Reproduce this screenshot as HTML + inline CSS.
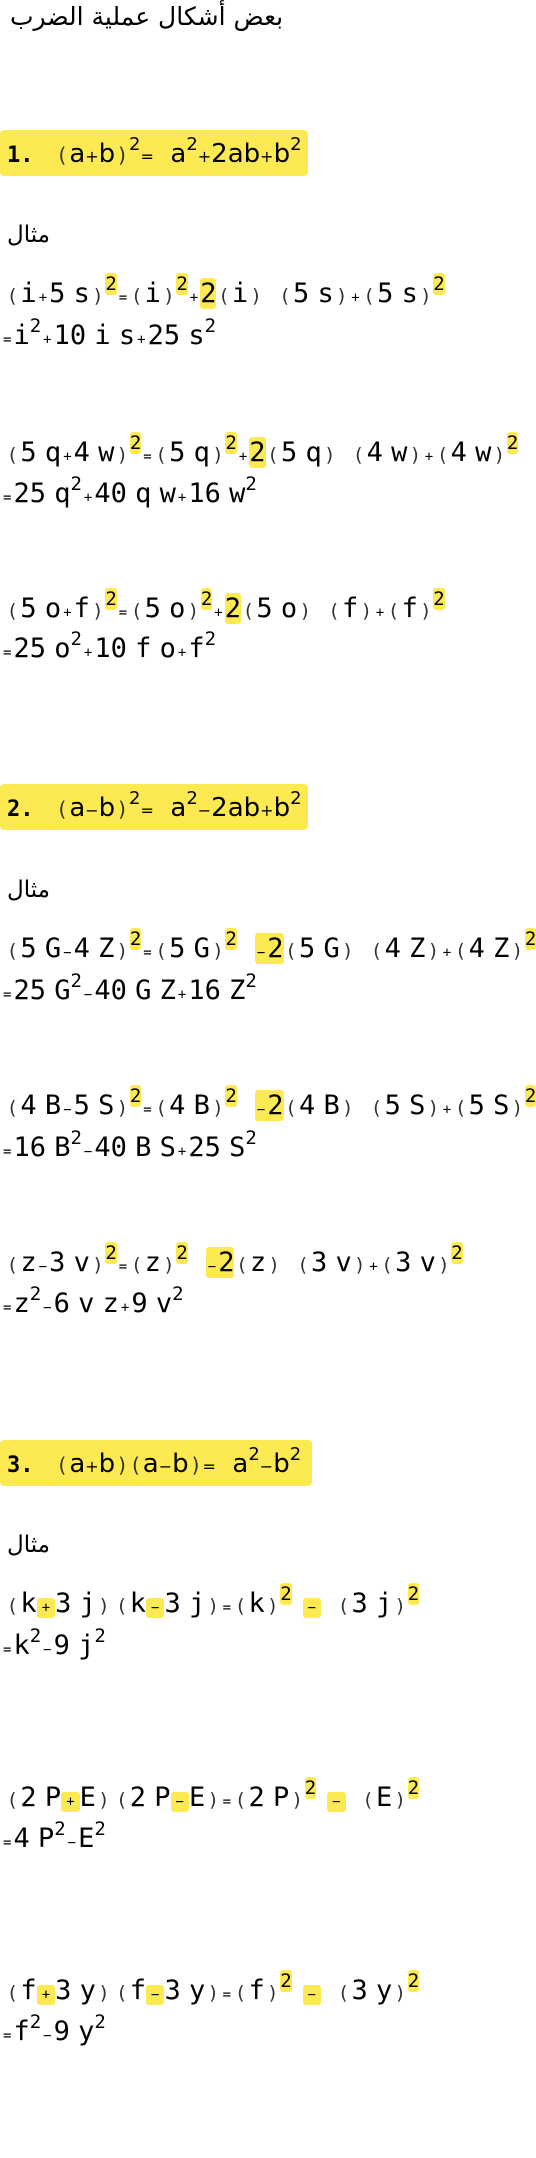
<!DOCTYPE html>
<html><head><meta charset="utf-8">
<style>
html,body{margin:0;padding:0;background:#fff;}
body{width:536px;height:2158px;position:relative;overflow:hidden;color:#000;}
.t{position:absolute;left:10px;top:2px;font-family:"DejaVu Sans",sans-serif;font-size:25px;direction:rtl;}
.m{position:absolute;left:7px;font-family:"DejaVu Sans",sans-serif;font-size:23px;direction:rtl;}
.box{position:absolute;left:0;height:46px;background:#fdea52;border-radius:4px;white-space:nowrap;font-family:"DejaVu Sans",sans-serif;font-size:26px;line-height:48px;}
.box b{font-family:"DejaVu Sans Mono",monospace;font-size:22px;margin-left:7px;margin-right:22px;}
.box .bp{font-size:20px;color:#333;margin:0 3px;}
.box .bo{font-size:16px;}
.box sup{font-size:18px;vertical-align:0;position:relative;top:-12px;}
.l{position:absolute;left:5px;white-space:nowrap;font-family:"DejaVu Sans Mono",monospace;font-size:27px;line-height:1;word-spacing:-8px;}
.o{font-size:14px;margin:0 2px;}
.p{font-family:"DejaVu Sans",sans-serif;font-size:19px;color:#333;margin:0 4px;}
.s{font-size:19px;position:relative;top:-12px;}
.h{background:#fdea52;border-radius:3px;}
.ho{font-size:14px;background:#fdea52;border-radius:3px;padding:2px 5px;}
.g{display:inline-block;width:14px;}
</style></head><body>
<div class="t">بعض أشكال عملية الضرب</div>

<div class="box" style="top:130px;width:308px"><b>1.</b><span class="bp">(</span>a<span class="bo">+</span>b<span class="bp">)</span><sup>2</sup><span class="bo">=</span>&nbsp; a<sup>2</sup><span class="bo">+</span>2ab<span class="bo">+</span>b<sup>2</sup></div>
<div class="m" style="top:222px">مثال</div>
<div class="l" style="top:280px"><span class="p">(</span>i<span class="o">+</span>5 s<span class="p">)</span><span class="s h">2</span><span class="o">=</span><span class="p">(</span>i<span class="p">)</span><span class="s h">2</span><span class="o">+</span><span class="h">2</span><span class="p">(</span>i<span class="p">)</span><i class="g"></i><span class="p">(</span>5 s<span class="p">)</span><span class="o">+</span><span class="p">(</span>5 s<span class="p">)</span><span class="s h">2</span></div>
<div class="l" style="top:322px;left:1px"><span class="o">=</span>i<span class="s">2</span><span class="o">+</span>10 i s<span class="o">+</span>25 s<span class="s">2</span></div>

<div class="l" style="top:439px"><span class="p">(</span>5 q<span class="o">+</span>4 w<span class="p">)</span><span class="s h">2</span><span class="o">=</span><span class="p">(</span>5 q<span class="p">)</span><span class="s h">2</span><span class="o">+</span><span class="h">2</span><span class="p">(</span>5 q<span class="p">)</span><i class="g"></i><span class="p">(</span>4 w<span class="p">)</span><span class="o">+</span><span class="p">(</span>4 w<span class="p">)</span><span class="s h">2</span></div>
<div class="l" style="top:480px;left:1px"><span class="o">=</span>25 q<span class="s">2</span><span class="o">+</span>40 q w<span class="o">+</span>16 w<span class="s">2</span></div>

<div class="l" style="top:595px"><span class="p">(</span>5 o<span class="o">+</span>f<span class="p">)</span><span class="s h">2</span><span class="o">=</span><span class="p">(</span>5 o<span class="p">)</span><span class="s h">2</span><span class="o">+</span><span class="h">2</span><span class="p">(</span>5 o<span class="p">)</span><i class="g"></i><span class="p">(</span>f<span class="p">)</span><span class="o">+</span><span class="p">(</span>f<span class="p">)</span><span class="s h">2</span></div>
<div class="l" style="top:635px;left:1px"><span class="o">=</span>25 o<span class="s">2</span><span class="o">+</span>10 f o<span class="o">+</span>f<span class="s">2</span></div>

<div class="box" style="top:784px;width:308px"><b>2.</b><span class="bp">(</span>a<span class="bo">−</span>b<span class="bp">)</span><sup>2</sup><span class="bo">=</span>&nbsp; a<sup>2</sup><span class="bo">−</span>2ab<span class="bo">+</span>b<sup>2</sup></div>
<div class="m" style="top:877px">مثال</div>
<div class="l" style="top:935px"><span class="p">(</span>5 G<span class="o">−</span>4 Z<span class="p">)</span><span class="s h">2</span><span class="o">=</span><span class="p">(</span>5 G<span class="p">)</span><span class="s h">2</span><i class="g" style="width:18px"></i><span class="h"><span class="o">−</span>2</span><span class="p">(</span>5 G<span class="p">)</span><i class="g"></i><span class="p">(</span>4 Z<span class="p">)</span><span class="o">+</span><span class="p">(</span>4 Z<span class="p">)</span><span class="s h">2</span></div>
<div class="l" style="top:977px;left:1px"><span class="o">=</span>25 G<span class="s">2</span><span class="o">−</span>40 G Z<span class="o">+</span>16 Z<span class="s">2</span></div>

<div class="l" style="top:1092px"><span class="p">(</span>4 B<span class="o">−</span>5 S<span class="p">)</span><span class="s h">2</span><span class="o">=</span><span class="p">(</span>4 B<span class="p">)</span><span class="s h">2</span><i class="g" style="width:18px"></i><span class="h"><span class="o">−</span>2</span><span class="p">(</span>4 B<span class="p">)</span><i class="g"></i><span class="p">(</span>5 S<span class="p">)</span><span class="o">+</span><span class="p">(</span>5 S<span class="p">)</span><span class="s h">2</span></div>
<div class="l" style="top:1134px;left:1px"><span class="o">=</span>16 B<span class="s">2</span><span class="o">−</span>40 B S<span class="o">+</span>25 S<span class="s">2</span></div>

<div class="l" style="top:1249px"><span class="p">(</span>z<span class="o">−</span>3 v<span class="p">)</span><span class="s h">2</span><span class="o">=</span><span class="p">(</span>z<span class="p">)</span><span class="s h">2</span><i class="g" style="width:18px"></i><span class="h"><span class="o">−</span>2</span><span class="p">(</span>z<span class="p">)</span><i class="g"></i><span class="p">(</span>3 v<span class="p">)</span><span class="o">+</span><span class="p">(</span>3 v<span class="p">)</span><span class="s h">2</span></div>
<div class="l" style="top:1290px;left:1px"><span class="o">=</span>z<span class="s">2</span><span class="o">−</span>6 v z<span class="o">+</span>9 v<span class="s">2</span></div>

<div class="box" style="top:1440px;width:312px"><b>3.</b><span class="bp">(</span>a<span class="bo">+</span>b<span class="bp">)</span><span class="bp">(</span>a<span class="bo">−</span>b<span class="bp">)</span><span class="bo">=</span>&nbsp; a<sup>2</sup><span class="bo">−</span>b<sup>2</sup></div>
<div class="m" style="top:1532px">مثال</div>
<div class="l" style="top:1590px"><span class="p">(</span>k<span class="ho">+</span>3 j<span class="p">)</span><i class="g" style="width:3px"></i><span class="p">(</span>k<span class="ho">−</span>3 j<span class="p">)</span><span class="o">=</span><span class="p">(</span>k<span class="p">)</span><span class="s h">2</span><i class="g" style="width:11px"></i><span class="ho">−</span><i class="g" style="width:15px"></i><span class="p">(</span>3 j<span class="p">)</span><span class="s h">2</span></div>
<div class="l" style="top:1632px;left:1px"><span class="o">=</span>k<span class="s">2</span><span class="o">−</span>9 j<span class="s">2</span></div>

<div class="l" style="top:1784px"><span class="p">(</span>2 P<span class="ho">+</span>E<span class="p">)</span><i class="g" style="width:3px"></i><span class="p">(</span>2 P<span class="ho">−</span>E<span class="p">)</span><span class="o">=</span><span class="p">(</span>2 P<span class="p">)</span><span class="s h">2</span><i class="g" style="width:11px"></i><span class="ho">−</span><i class="g" style="width:15px"></i><span class="p">(</span>E<span class="p">)</span><span class="s h">2</span></div>
<div class="l" style="top:1825px;left:1px"><span class="o">=</span>4 P<span class="s">2</span><span class="o">−</span>E<span class="s">2</span></div>

<div class="l" style="top:1977px"><span class="p">(</span>f<span class="ho">+</span>3 y<span class="p">)</span><i class="g" style="width:3px"></i><span class="p">(</span>f<span class="ho">−</span>3 y<span class="p">)</span><span class="o">=</span><span class="p">(</span>f<span class="p">)</span><span class="s h">2</span><i class="g" style="width:11px"></i><span class="ho">−</span><i class="g" style="width:15px"></i><span class="p">(</span>3 y<span class="p">)</span><span class="s h">2</span></div>
<div class="l" style="top:2018px;left:1px"><span class="o">=</span>f<span class="s">2</span><span class="o">−</span>9 y<span class="s">2</span></div>
</body></html>
